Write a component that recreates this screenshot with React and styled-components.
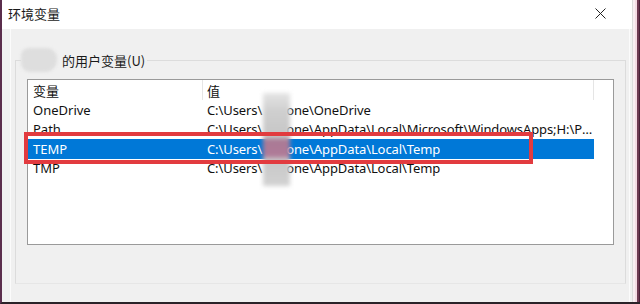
import React from 'react'
import styled, { createGlobalStyle } from 'styled-components'

const GlobalStyle = createGlobalStyle`
  html, body {
    margin: 0;
    padding: 0;
    background: #fff;
  }
  body {
    font-family: "Noto Sans", "Noto Sans CJK SC", sans-serif;
  }
`

const Window = styled.div`
  box-sizing: border-box;
  width: 640px;
  height: 304px;
  display: flex;
  flex-direction: column;
  border-left: 2px solid #5a2d4c;
  border-bottom: 2px solid #2a2228;
  padding-right: 8px;
  box-shadow: inset -1px 0 #4a2038, inset -3px 0 #6e3a52, inset -5px 0 #f4dbe3,
    inset -7px 0 #f9eef2, inset -8px 0 #dcdcdc;
  background: #f0f0f0;
`

const TitleBar = styled.div`
  height: 27px;
  flex: none;
  display: flex;
  align-items: center;
  justify-content: space-between;
  padding: 0 26px 2px 6px;
  background: #fff;
`

const Title = styled.span`
  font-family: "Noto Sans CJK SC", sans-serif;
  font-size: 13px;
  color: #1a1a1a;
`

const Body = styled.div`
  flex: 1;
  display: flex;
  background: #f0f0f0;
`

const Page = styled.div`
  flex: 1;
  margin: 0 2px 0 8px;
  padding: 19px 3px 0 4px;
  border-left: 1px solid #fbfbfb;
  border-right: 1px solid #fbfbfb;
`

const Group = styled.fieldset`
  margin: 0;
  padding: 7px 11px 38px;
  border: 1px solid #dcdcdc;
  border-bottom-color: #e6e6e6;
  min-width: 0;
`

const Legend = styled.legend`
  display: flex;
  align-items: center;
  gap: 5px;
  margin-left: -6px;
  padding: 0 2px 0 0;
  height: 24px;
  font-family: "Noto Sans CJK SC", sans-serif;
  font-size: 13px;
  color: #1a1a1a;
`

const Blob = styled.span`
  width: 36px;
  height: 24px;
  border-radius: 8px 10px 12px 9px;
  background: #dedede;
  filter: blur(1.5px);
`

const ListView = styled.div`
  position: relative;
  height: 164px;
  border: 1px solid #9a9a9a;
  background: #fff;
`

const Row = styled.div`
  display: flex;
  width: 566px;
  height: ${p => (p.$header ? '20px' : '19.5px')};
  align-items: center;
  background: ${p => (p.$selected ? '#0078d7' : 'transparent')};
  color: ${p => (p.$selected ? '#fff' : '#111')};
  font-size: 13px;
`

const Cell = styled.div`
  box-sizing: border-box;
  height: 100%;
  display: flex;
  align-items: center;
  width: ${p => p.$width}px;
  padding-left: ${p => p.$pad}px;
  white-space: nowrap;
  overflow: hidden;
  border-right: ${p => (p.$divider ? '1px solid #e5e5e5' : 'none')};
  font-family: ${p =>
    p.$cjk ? '"Noto Sans CJK SC", sans-serif' : '"Noto Sans", sans-serif'};
`

const Clip = styled.span`
  overflow: hidden;
  text-overflow: ellipsis;
  min-width: 0;
  letter-spacing: -0.1px;
`

const Hidden = styled.span`
  display: inline-block;
  width: 24px;
`

const Smudge = styled.div`
  position: absolute;
  left: 235px;
  top: 13px;
  width: 27px;
  height: 93px;
  background: linear-gradient(
    #e4e4e4 0%,
    #cfcfcf 20%,
    #c6c6c6 48%,
    #a97a95 50%,
    #b07a98 68%,
    #c8c8c8 71%,
    #d2d2d2 100%
  );
  filter: blur(2px);
`

const Highlight = styled.div`
  position: absolute;
  left: -4px;
  top: 52px;
  width: 509px;
  height: 32px;
  box-sizing: border-box;
  border: 4px solid #e23b3f;
`

const rows = [
  { name: 'OneDrive', value: 'one\\OneDrive' },
  {
    name: 'Path',
    value: 'one\\AppData\\Local\\Microsoft\\WindowsApps;H:\\Program Files\\Microsoft VS Code\\bin',
  },
  { name: 'TEMP', value: 'one\\AppData\\Local\\Temp', selected: true },
  { name: 'TMP', value: 'one\\AppData\\Local\\Temp' },
]

function CloseIcon() {
  return (
    <svg width="11" height="11" viewBox="0 0 11 11">
      <path d="M0.5 0.5L10.5 10.5M10.5 0.5L0.5 10.5" stroke="#222" strokeWidth="1" />
    </svg>
  )
}

export default function App() {
  return (
    <>
      <GlobalStyle />
      <Window>
        <TitleBar>
          <Title>环境变量</Title>
          <CloseIcon />
        </TitleBar>
        <Body>
          <Page>
            <Group>
              <Legend>
                <Blob />
                的用户变量(U)
              </Legend>
              <ListView>
                <Row $header>
                  <Cell $width={175} $pad={5} $divider $cjk>变量</Cell>
                  <Cell $width={391} $pad={4} $divider $cjk>值</Cell>
                </Row>
                {rows.map(r => (
                  <Row key={r.name} $selected={r.selected}>
                    <Cell $width={175} $pad={5}>{r.name}</Cell>
                    <Cell $width={391} $pad={4}>
                      <Clip>
                        C:\Users\<Hidden />{r.value}
                      </Clip>
                    </Cell>
                  </Row>
                ))}
                <Smudge />
                <Highlight />
              </ListView>
            </Group>
          </Page>
        </Body>
      </Window>
    </>
  )
}
